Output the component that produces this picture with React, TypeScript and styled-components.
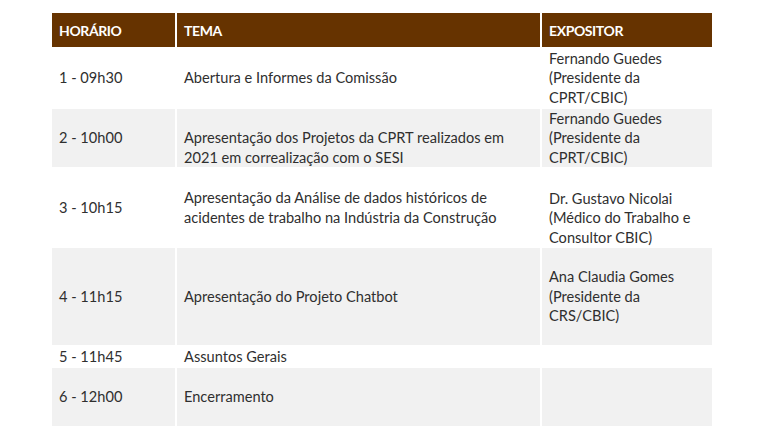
import React from 'react';
import styled, {createGlobalStyle} from 'styled-components';

const GlobalStyle = createGlobalStyle`
  html, body {
    margin: 0;
    padding: 0;
    background: #ffffff;
  }
  body {
    font-family: Lato, "Liberation Sans", sans-serif;
  }
`

const Page = styled.div`
  padding: 13px 0 0 52px;
`

const Grid = styled.div`
  display: grid;
  width: 660px;
  grid-template-columns: 123px 363px 170px;
  grid-template-rows: 34px 62px 58px 81px 97px 23px 58px;
  column-gap: 2px;
`

const HeadCell = styled.div`
  display: flex;
  align-items: center;
  padding: 0 7px;
  background-color: #663300;
  color: #ffffff;
  font-weight: 700;
  font-size: 14px;
  letter-spacing: -0.4px;
`

const Cell = styled.div<{ $shade: boolean; $align?: 'center' | 'flex-end' }>`
  display: flex;
  align-items: ${p => p.$align || 'center'};
  padding: 0 7px;
  background-color: ${p => (p.$shade ? '#f1f1f1' : '#ffffff')};
  color: #2f2f2f;
  font-size: 14.6px;
  line-height: 19.4px;
`

const CellText = styled.div<{ $lift?: boolean }>`
  white-space: pre-line;
  padding-bottom: ${p => (p.$lift ? '1px' : '0')};
`

type Row = {
    time: string
    topic: string
    speaker: string
    topicAlign?: 'center' | 'flex-end'
    speakerAlign?: 'center' | 'flex-end'
}

const rows: Row[] = [
    {time: '1 - 09h30', topic: 'Abertura e Informes da Comissão', speaker: 'Fernando Guedes\n(Presidente da\nCPRT/CBIC)'},
    {
        time: '2 - 10h00',
        topic: 'Apresentação dos Projetos da CPRT realizados em\n2021 em correalização com o SESI',
        speaker: 'Fernando Guedes\n(Presidente da\nCPRT/CBIC)',
        topicAlign: 'flex-end'
    },
    {
        time: '3 - 10h15',
        topic: 'Apresentação da Análise de dados históricos de\nacidentes de trabalho na Indústria da Construção',
        speaker: 'Dr. Gustavo Nicolai\n(Médico do Trabalho e\nConsultor CBIC)',
        speakerAlign: 'flex-end'
    },
    {time: '4 - 11h15', topic: 'Apresentação do Projeto Chatbot', speaker: 'Ana Claudia Gomes\n(Presidente da\nCRS/CBIC)'},
    {time: '5 - 11h45', topic: 'Assuntos Gerais', speaker: ''},
    {time: '6 - 12h00', topic: 'Encerramento', speaker: ''},
]

const App = () => {
    return (
        <Page>
            <GlobalStyle/>
            <Grid>
                <HeadCell>HORÁRIO</HeadCell>
                <HeadCell>TEMA</HeadCell>
                <HeadCell>EXPOSITOR</HeadCell>
                {rows.map((row, i) => {
                    const shade = i % 2 === 1
                    return (
                        <React.Fragment key={row.time}>
                            <Cell $shade={shade}><CellText>{row.time}</CellText></Cell>
                            <Cell $shade={shade} $align={row.topicAlign}><CellText>{row.topic}</CellText></Cell>
                            <Cell $shade={shade} $align={row.speakerAlign}>
                                <CellText $lift={!!row.speakerAlign}>{row.speaker}</CellText>
                            </Cell>
                        </React.Fragment>
                    )
                })}
            </Grid>
        </Page>
    );
}

export default App;
